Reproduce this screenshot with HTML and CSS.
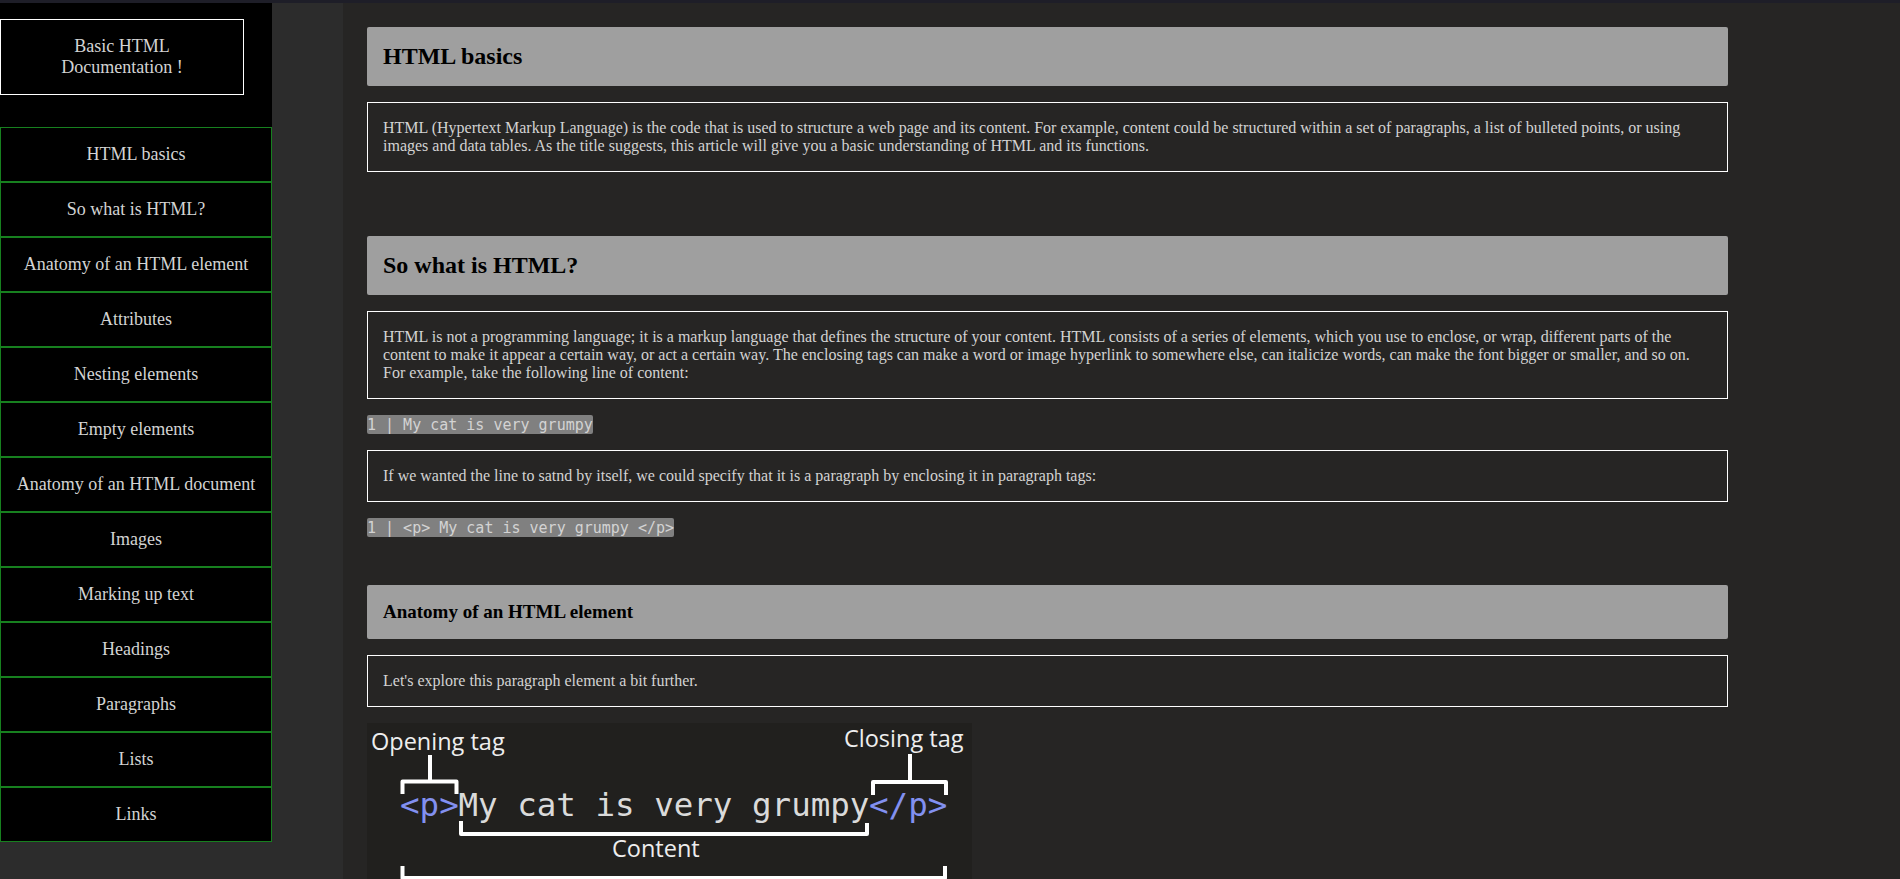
FILE: index.html
```
<!DOCTYPE html>
<html lang="en">
<head>
    <meta charset="UTF-8">
    <meta name="viewport" content="width=device-width, initial-scale=1.0">
    <title>Basic HTML Documentation</title>
    <link rel="stylesheet" href="styles.css">
</head>
<body>
    <div class="page">
        <div class="side">
            <nav id="navbar">
                <header class="nav-title">Basic HTML Documentation !</header>
                <a class="nav-link" href="#HTML_basics">HTML basics</a>
                <a class="nav-link" href="#So_what_is_HTML">So what is HTML?</a>
                <a class="nav-link" href="#Anatomy_of_an_HTML_element">Anatomy of an HTML element</a>
                <a class="nav-link" href="#Attributes">Attributes</a>
                <a class="nav-link" href="#Nesting_elements">Nesting elements</a>
                <a class="nav-link" href="#Empty_elements">Empty elements</a>
                <a class="nav-link" href="#Anatomy_of_an_HTML_document">Anatomy of an HTML document</a>
                <a class="nav-link" href="#Images">Images</a>
                <a class="nav-link" href="#Marking_up_text">Marking up text</a>
                <a class="nav-link" href="#Headings">Headings</a>
                <a class="nav-link" href="#Paragraphs">Paragraphs</a>
                <a class="nav-link" href="#Lists">Lists</a>
                <a class="nav-link" href="#Links">Links</a>
            </nav>
        </div>

        <main id="main-doc">
            <section class="main-section" id="HTML_basics">
                <h2>HTML basics</h2>
                <p>HTML (Hypertext Markup Language) is the code that is used to structure a web page and its content. For example, content could be structured within a set of paragraphs, a list of bulleted points, or using images and data tables. As the title suggests, this article will give you a basic understanding of HTML and its functions.</p>
            </section>

            <section class="main-section" id="So_what_is_HTML">
                <h2>So what is HTML?</h2>
                <p>HTML is not a programming language; it is a markup language that defines the structure of your content. HTML consists of a series of elements, which you use to enclose, or wrap, different parts of the content to make it appear a certain way, or act a certain way. The enclosing tags can make a word or image hyperlink to somewhere else, can italicize words, can make the font bigger or smaller, and so on. For example, take the following line of content:</p>
                <code>1 | My cat is very grumpy</code>
                <p>If we wanted the line to satnd by itself, we could specify that it is a paragraph by enclosing it in paragraph tags:</p>
                <code>1 | &lt;p&gt; My cat is very grumpy &lt;/p&gt;</code>

                <section class="sub-section" id="Anatomy_of_an_HTML_element">
                    <h3>Anatomy of an HTML element</h3>
                    <p>Let's explore this paragraph element a bit further.</p>
                    <svg class="diagram" viewBox="0 0 1210 380" role="img" aria-label="Parts of a paragraph element">
                        <text class="label" x="8" y="54">Opening tag</text>
                        <text class="label" x="954" y="48">Closing tag</text>
                        <text class="label" x="490" y="268">Content</text>
                        <text class="tag" x="66" y="186">&lt;p&gt;</text>
                        <text class="content" x="183" y="186">My cat is very grumpy</text>
                        <text class="tag" x="1004" y="186">&lt;/p&gt;</text>
                        <path class="bracket" d="M126 64V117M71 142V117H179V142" />
                        <path class="bracket" d="M1086 62V118M1012 144V118H1158V144" />
                        <path class="bracket" d="M188 196V222H1000V200" />
                        <path class="bracket" d="M71 286V310H1156V286" />
                    </svg>
                </section>
            </section>
        </main>
    </div>
</body>
</html>
```
FILE: styles.css
```
* {
    box-sizing: border-box;
}

body {
    margin: 0;
    background-color: #262524;
    color: lightgray;
    font-family: "Liberation Serif", "Times New Roman", serif;
    font-size: 16px;
    line-height: 18px;
}

.page {
    display: grid;
    grid-template-columns: 343px 1fr;
    height: 100vh;
    border-top: 3px solid #1e1e28;
}

.side {
    background-color: #2c2c2c;
}

#navbar {
    width: 272px;
    padding-top: 16px;
    background-color: black;
    font-size: 18px;
    line-height: 21px;
    text-align: center;
}

.nav-title {
    width: 244px;
    margin-bottom: 32px;
    padding: 16px 32px;
    border: 1px solid white;
}

.nav-link {
    display: block;
    padding: 16px 0;
    border: 1px solid #17801f;
    color: lightgray;
    text-decoration: none;
}

.nav-link:hover {
    background-color: #17801f;
}

#main-doc {
    padding: 24px 172px 24px 24px;
    overflow-y: auto;
    scrollbar-width: none;
}

.main-section {
    display: flex;
    flex-direction: column;
    align-items: flex-start;
    gap: 16px;
    margin-bottom: 64px;
}

.sub-section {
    display: flex;
    flex-direction: column;
    gap: 16px;
    width: 100%;
    margin-top: 32px;
}

h2, h3 {
    width: 100%;
    margin: 0;
    padding: 16px;
    border-radius: 2px;
    background-color: #9f9f9f;
    color: black;
}

h2 {
    font-size: 24px;
    line-height: 27px;
}

h3 {
    font-size: 19px;
    line-height: 22px;
}

p {
    width: 100%;
    margin: 0;
    padding: 16px 15px;
    border: 1px solid white;
}

code {
    padding-top: 2px;
    border-radius: 2px;
    background-color: gray;
    font-family: "DejaVu Sans Mono", monospace;
    font-size: 15px;
    line-height: 17px;
}

.diagram {
    width: 605px;
    max-width: 100%;
    background-color: #21201e;
}

.label {
    fill: #eeeeee;
    font-family: "Open Sans", sans-serif;
    font-size: 47px;
}

.tag, .content {
    font-family: "DejaVu Sans Mono", monospace;
    font-size: 65px;
}

.tag {
    fill: #8290f0;
}

.content {
    fill: #dadada;
}

.bracket {
    fill: none;
    stroke: white;
    stroke-width: 8;
    stroke-linejoin: round;
}
```
